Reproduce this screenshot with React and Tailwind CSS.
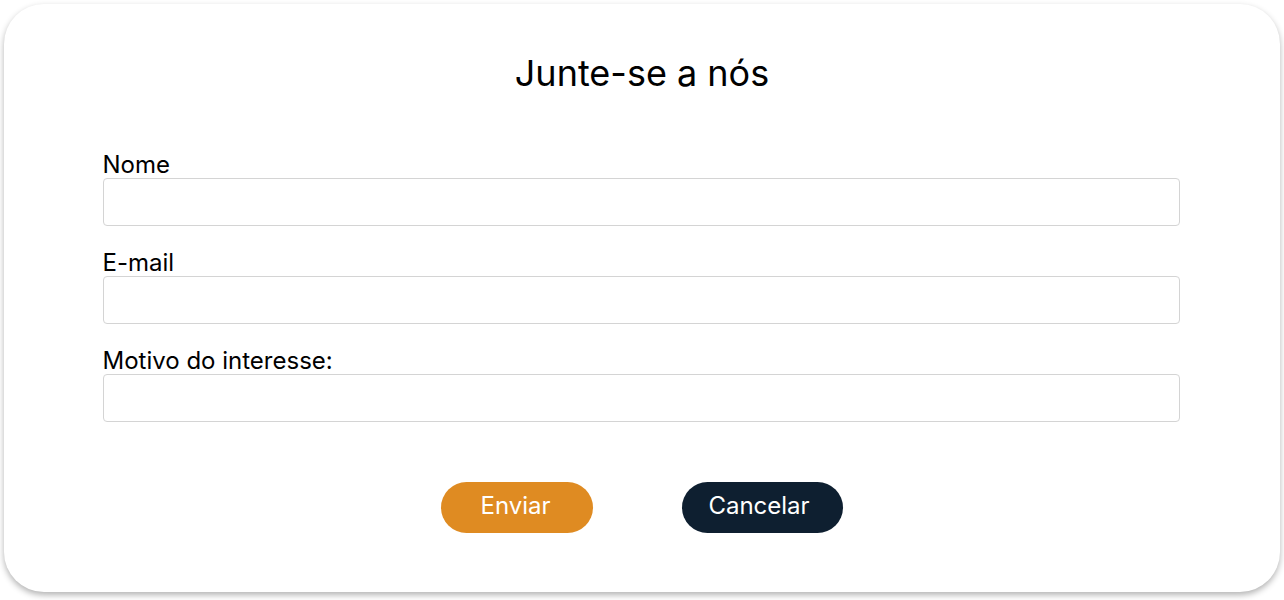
export default function App() {
  return (
    <div className="w-[1284px] h-[600px] bg-white pt-[4px] px-[4px]" style={{ fontFamily: "Inter, 'Liberation Sans', sans-serif" }}>
      <div className="h-[588px] w-[1276px] bg-white rounded-[40px] shadow-[0_3px_6px_rgba(0,0,0,0.3)] flex flex-col items-center">
        <h1 className="mt-[45px] text-[36px] leading-[48px] text-black font-normal">Junte-se a nós</h1>
        <form className="mt-[55px] w-[1077px] -translate-x-[1px] flex flex-col gap-[24px]">
          <div className="flex flex-col">
            <label className="text-[24px] leading-[26px] text-black">Nome</label>
            <input className="h-[48px] border border-[#d4d4d4] rounded-[4px] outline-none" />
          </div>
          <div className="flex flex-col">
            <label className="text-[24px] leading-[26px] text-black">E-mail</label>
            <input className="h-[48px] border border-[#d4d4d4] rounded-[4px] outline-none" />
          </div>
          <div className="flex flex-col">
            <label className="text-[24px] leading-[26px] text-black">Motivo do interesse:</label>
            <input className="h-[48px] border border-[#d4d4d4] rounded-[4px] outline-none" />
          </div>
        </form>
        <div className="mt-[60px] flex gap-[89px]">
          <button className="w-[152px] h-[51px] pb-[4px] pr-[3px] rounded-full bg-[#df8b22] text-white text-[24px]">Enviar</button>
          <button className="w-[161px] h-[51px] pb-[4px] pr-[7px] rounded-full bg-[#0e1f30] text-white text-[24px]">Cancelar</button>
        </div>
      </div>
    </div>
  );
}
